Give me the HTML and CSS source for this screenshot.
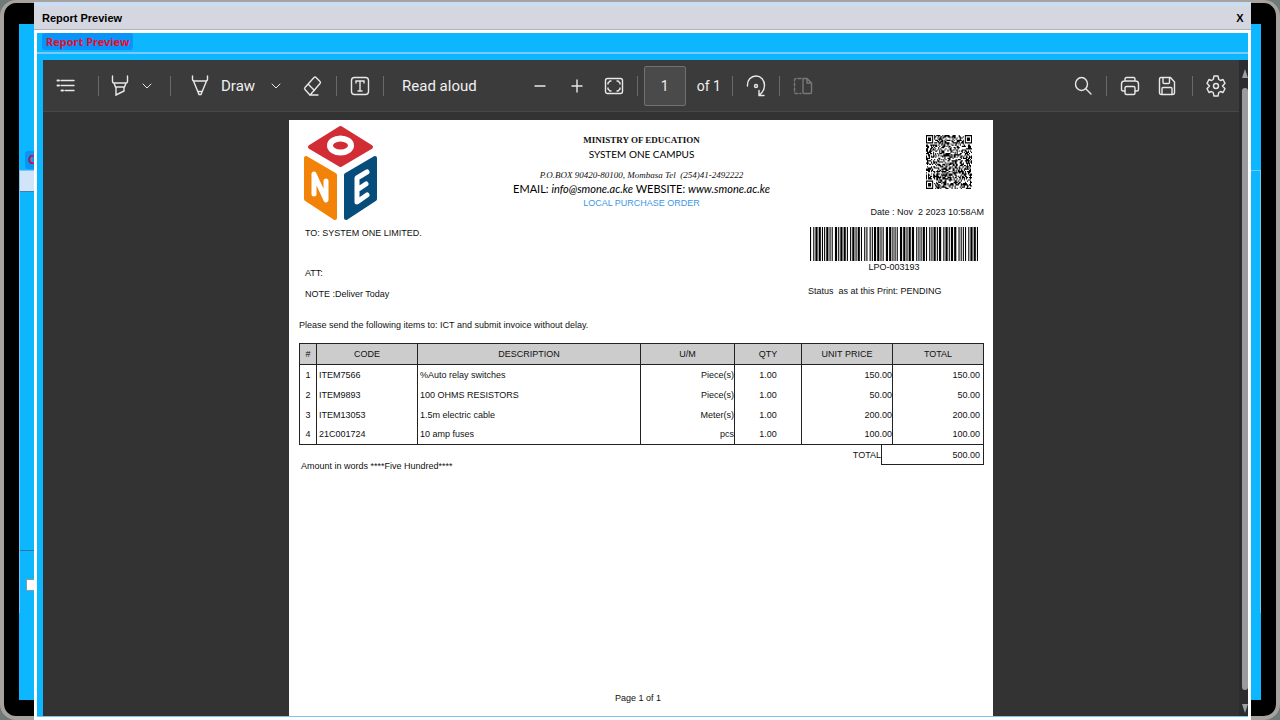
FILE: index.html
```
<!DOCTYPE html>
<html lang="en">

<head>
    <meta charset="UTF-8">
    <meta name="viewport" content="width=device-width, initial-scale=1.0">
    <title>Report Preview</title>
    <link rel="stylesheet" href="styles.css">
</head>

<body>
    <!-- form behind the preview window -->
    <div class="monitor">
        <div class="desktop">
            <span class="desktop-label">C</span>
            <div class="desktop-form">
                <div class="desktop-field"></div>
                <div class="desktop-line"></div>
                <div class="desktop-check"></div>
            </div>
        </div>
    </div>

    <div class="window">
        <div class="titlebar">
            <span>Report Preview</span>
            <button type="button" class="close" aria-label="Close">X</button>
        </div>
        <div class="window-body">
            <div class="caption"><span class="caption-label">Report Preview</span></div>
            <div class="viewer">
                <div class="viewer-main">
                    <div class="toolbar">
                        <button type="button" class="tool" aria-label="Contents">
                            <svg width="20" height="20" viewBox="0 0 20 20"><path d="M5 4.500h13M5 9.500h13M9 14.500h9"/><path d="M1.500 4.500h1.500M1.500 9.500h1.500M5.500 14.500h1.500" stroke-width="2"/></svg>
                        </button>
                        <span class="sep sep-first"></span>
                        <button type="button" class="tool" aria-label="Highlight">
                            <svg width="20" height="24" viewBox="0 0 20 24"><path d="M2.500 2v5.500q0 1.500 1.500 1.500h12q1.500 0 1.500-1.500V2M4 9l1.500 4h9L16 9M6 13v8l8-4v-4"/></svg>
                        </button>
                        <button type="button" class="chevron" aria-label="Highlight options">
                            <svg width="10" height="8" viewBox="0 0 10 8"><path d="M1 2l4 4 4-4"/></svg>
                        </button>
                        <span class="sep sep-wide"></span>
                        <button type="button" class="tool tool-text">
                            <svg width="24" height="24" viewBox="0 0 24 24"><path d="M4.500 2v3q0 2 1.500 2h12q1.500 0 1.500-2V2M5.500 7l5.500 13.500h2L18.500 7M10 17.500h4"/></svg>
                            <span>Draw</span>
                        </button>
                        <button type="button" class="chevron chevron-wide" aria-label="Draw options">
                            <svg width="10" height="8" viewBox="0 0 10 8"><path d="M1 2l4 4 4-4"/></svg>
                        </button>
                        <button type="button" class="tool" aria-label="Erase">
                            <svg width="20" height="22" viewBox="0 0 20 22"><path d="M11 2.500q1-1 2 0l4 4q1 1 0 2L8 19q-1 1-2 0l-4-4.500q-1-1 0-2zM5.500 9.500l6 6M6.500 20H15"/></svg>
                        </button>
                        <span class="sep"></span>
                        <button type="button" class="tool" aria-label="Add text">
                            <svg width="20" height="20" viewBox="0 0 20 20"><rect x="1.500" y="1.500" width="17" height="17" rx="3"/><path d="M6 7V5h8v2M10 5v10M8 15h4"/></svg>
                        </button>
                        <span class="sep"></span>
                        <button type="button" class="tool tool-read">Read aloud</button>
                        <div class="zoom">
                            <button type="button" class="tool" aria-label="Zoom out">
                                <svg width="14" height="14" viewBox="0 0 14 14"><path d="M2 7h10"/></svg>
                            </button>
                            <button type="button" class="tool" aria-label="Zoom in">
                                <svg width="14" height="14" viewBox="0 0 14 14"><path d="M2 7h10M7 1v12"/></svg>
                            </button>
                            <button type="button" class="tool" aria-label="Fit to page">
                                <svg width="20" height="20" viewBox="0 0 20 20"><rect x="1.500" y="2.500" width="17" height="15" rx="2"/><path d="M4 8V7l2-2h1M13 5h1l2 2v1M16 12v1l-2 2h-1M7 15H6l-2-2v-1"/></svg>
                            </button>
                        </div>
                        <span class="sep sep-page"></span>
                        <input class="page-input" id="pageNumber" type="text" value="1">
                        <label class="page-count" for="pageNumber">of 1</label>
                        <span class="sep"></span>
                        <button type="button" class="tool" aria-label="Rotate">
                            <svg width="20" height="24" viewBox="0 0 20 24"><path d="M1.500 12C1 6 5 2 10 2s8.500 4 8.500 9.500c0 4-2 7-5 9.500M13 16.500V21.500h5"/><circle cx="10" cy="12" r="1.500"/></svg>
                        </button>
                        <span class="sep"></span>
                        <button type="button" class="tool tool-off" aria-label="Page view" disabled>
                            <svg width="20" height="20" viewBox="0 0 20 20"><path d="M10 2.500h4l4.500 4.500v9.500q0 1-1 1H11q-1 0-1-1zM14 2.500V7h4.500"/><path d="M8 2.500H3q-1.500 0-1.500 1.500v12q0 1.500 1.500 1.500h5" stroke-dasharray="3 2"/></svg>
                        </button>
                        <div class="toolbar-right">
                            <button type="button" class="tool" aria-label="Find">
                                <svg width="20" height="22" viewBox="0 0 20 22"><ellipse cx="8.500" cy="9" rx="6" ry="6.500"/><path d="M13 14l5 5"/></svg>
                            </button>
                            <span class="sep"></span>
                            <button type="button" class="tool" aria-label="Print">
                                <svg width="20" height="20" viewBox="0 0 20 20"><path d="M5 15H3q-1.500 0-1.500-1.500V8q0-3 3-3h11q3 0 3 3v5.500Q18.500 15 17 15h-2M5 5V3q0-1.500 1.500-1.500h7Q15 1.500 15 3v2"/><rect x="5" y="10.500" width="10" height="8" rx="1.500"/></svg>
                            </button>
                            <button type="button" class="tool tool-save" aria-label="Save">
                                <svg width="20" height="20" viewBox="0 0 20 20"><path d="M4 1.500h9.500L17.500 6v10.500q0 2-2 2h-11q-2 0-2-2v-13q0-2 1.500-2zM6 2v4.500q0 1 1 1h4.500q1 0 1-1V2M5 18v-5.500q0-1 1-1h8q1 0 1 1V18"/></svg>
                            </button>
                            <span class="sep sep-gear"></span>
                            <button type="button" class="tool" aria-label="Settings">
                                <svg width="20" height="24" viewBox="0 0 20 24"><path d="M8 2h4l.8 3.500 1.700 1L17 5.500l2 3.800L16.500 12l2.500 2.700-2 3.800-2.500-1-1.700 1L12 22H8l-.8-3.500-1.700-1-2.500 1-2-3.800L3.500 12 1 9.300l2-3.800 2.500 1 1.700-1z" stroke-linejoin="round"/><circle cx="10" cy="12" r="2.500"/></svg>
                            </button>
                        </div>
                    </div>

                    <div class="paper">
                        <div class="head">
                            <div class="head-left">
                                <svg class="logo" width="73" height="96" viewBox="0 0 73 96" role="img" aria-label="ONE">
                                    <g stroke-linejoin="round" stroke-width="4">
                                        <path fill="#d22d35" stroke="#d22d35" d="M36.500 3L67 22 36.500 40 6 22z"/>
                                        <path fill="#f28208" stroke="#f28208" d="M2 33l29 17v43L2 74z"/>
                                        <path fill="#064d7c" stroke="#064d7c" d="M71 33L42 50v43l29-19z"/>
                                    </g>
                                    <ellipse cx="36.500" cy="20.500" rx="10.500" ry="7" fill="none" stroke="#fff" stroke-width="6"/>
                                    <g fill="none" stroke="#fff" stroke-width="5" stroke-linecap="round" stroke-linejoin="round">
                                        <path d="M10 69V49l12 26V56"/>
                                        <path d="M63 47l-10 6v24l10-7M53 65l9-6"/>
                                    </g>
                                </svg>
                                <p class="to">TO: SYSTEM ONE LIMITED.</p>
                                <p class="att">ATT:</p>
                                <p class="note">NOTE :Deliver Today</p>
                            </div>
                            <div class="head-center">
                                <p class="ministry">MINISTRY OF EDUCATION</p>
                                <p class="campus">SYSTEM ONE CAMPUS</p>
                                <p class="pobox">P.O.BOX 90420-80100, Mombasa Tel&nbsp; (254)41-2492222</p>
                                <p class="contact">EMAIL: <i>info@smone.ac.ke</i> WEBSITE: <i>www.smone.ac.ke</i></p>
                                <p class="order">LOCAL PURCHASE ORDER</p>
                            </div>
                            <div class="head-right">
                                <svg class="qr" id="qr" viewBox="0 0 45 45" preserveAspectRatio="none" role="img" aria-label="QR code"></svg>
                                <p class="date">Date : Nov&nbsp; 2 2023 10:58AM</p>
                                <svg class="barcode" id="barcode" preserveAspectRatio="none" role="img" aria-label="LPO-003193"></svg>
                                <p class="barcode-text">LPO-003193</p>
                                <p class="status">Status&nbsp; as at this Print: PENDING</p>
                            </div>
                        </div>

                        <p class="intro">Please send the following items to: ICT and submit invoice without delay.</p>

                        <table class="items">
                            <colgroup>
                                <col class="col-num"><col class="col-code"><col class="col-desc"><col class="col-um"><col class="col-qty"><col class="col-price"><col class="col-total">
                            </colgroup>
                            <thead>
                                <tr><th>#</th><th>CODE</th><th>DESCRIPTION</th><th>U/M</th><th>QTY</th><th>UNIT PRICE</th><th>TOTAL</th></tr>
                            </thead>
                            <tbody>
                                <tr><td>1</td><td>ITEM7566</td><td>%Auto relay switches</td><td>Piece(s)</td><td>1.00</td><td>150.00</td><td>150.00</td></tr>
                                <tr><td>2</td><td>ITEM9893</td><td>100 OHMS RESISTORS</td><td>Piece(s)</td><td>1.00</td><td>50.00</td><td>50.00</td></tr>
                                <tr><td>3</td><td>ITEM13053</td><td>1.5m electric cable</td><td>Meter(s)</td><td>1.00</td><td>200.00</td><td>200.00</td></tr>
                                <tr><td>4</td><td>21C001724</td><td>10 amp fuses</td><td>pcs</td><td>1.00</td><td>100.00</td><td>100.00</td></tr>
                            </tbody>
                        </table>
                        <div class="summary">
                            <p class="words">Amount in words ****Five Hundred****</p>
                            <span>TOTAL</span>
                            <span class="sum">500.00</span>
                        </div>
                        <p class="page-no">Page 1 of 1</p>
                    </div>
                </div>
                <div class="scrollbar">
                    <span class="arrow-up"></span>
                    <span class="thumb"></span>
                    <span class="arrow-down"></span>
                </div>
            </div>
        </div>
    </div>
    <script src="codes.js"></script>
</body>

</html>
```
FILE: codes.js
```
// Code 39: n = narrow, w = wide, bars and spaces alternate
var code39 = {
    "0": "nnnwwnwnn", "1": "wnnwnnnnw", "3": "wnwwnnnnn", "9": "nnwwnnwnn",
    "L": "nnwnnnnww", "P": "nnwnwnnwn", "O": "wnnnwnnwn",
    "-": "nwnnnnwnw", "*": "nwnnwnwnn"
};

function drawBarcode(svg, text) {
    var x = 0, d = "";
    ("*" + text + "*").split("").forEach(function (ch) {
        for (var i = 0; i < 9; i++) {
            var w = code39[ch][i] === "w" ? 2 : 1;
            if (i % 2 === 0) {
                d += "M" + x + " 0h" + w + "v10h-" + w + "z";
            }
            x += w;
        }
        x += 1;
    });
    svg.setAttribute("viewBox", "0 0 " + (x - 1) + " 10");
    svg.innerHTML = '<path d="' + d + '"/>';
}

function drawQr(svg) {
    var size = 45, seed = 3193, d = "";
    // finder squares in three corners
    function finder(x, y) {
        if (x > size - 9 && y < 8) { x = size - 1 - x; }
        if (y > size - 9 && x < 8) { y = size - 1 - y; }
        if (x > 7 || y > 7) { return null; }
        var r = Math.max(Math.abs(x - 3), Math.abs(y - 3));
        return r === 3 || r < 2;
    }
    for (var y = 0; y < size; y++) {
        for (var x = 0; x < size; x++) {
            seed = (seed * 1103515245 + 12345) % 2147483648;
            var on = finder(x, y);
            if (on === null) { on = seed / 2147483648 > 0.48; }
            if (on) { d += "M" + x + " " + y + "h1v1h-1z"; }
        }
    }
    svg.innerHTML = '<path d="' + d + '"/>';
}

drawBarcode(document.getElementById("barcode"), "LPO-003193");
drawQr(document.getElementById("qr"));
```
FILE: styles.css
```
* {
    margin: 0;
    padding: 0;
    box-sizing: border-box;
}

body {
    height: 100vh;
    overflow: hidden;
    background: #6f7b77;
    font-family: "Liberation Sans", Arial, sans-serif;
    font-size: 9px;
    line-height: 12px;
    color: #111;
}

button {
    border: 0;
    background: none;
    font: inherit;
    color: inherit;
}

/* monitor frame */
.monitor {
    height: 100%;
    padding: 21px 15px 16px;
    border: 4px solid #a8a29e;
    border-top-width: 3px;
    border-radius: 16px;
    background: #000;
}

.desktop {
    display: flex;
    flex-direction: column;
    height: 100%;
    padding-top: 127px;
    background: #0cb7ff;
}

.desktop-label {
    width: 40px;
    margin-left: 6px;
    padding: 1px 3px;
    border-radius: 3px;
    background: #0a94fa;
    color: #d0103a;
    font: bold 12px/16px "Noto Sans", sans-serif;
}

.desktop-form {
    height: 443px;
    margin-top: 1px;
    border: 1px solid #7cc4f5;
    border-bottom: 0;
}

.desktop-field {
    width: 60px;
    height: 21px;
    border-bottom: 1px solid #4a7fa5;
    background: #d2e4f8;
}

.desktop-line {
    width: 60px;
    height: 359px;
    border-bottom: 1px solid #35739a;
}

.desktop-check {
    width: 12px;
    height: 12px;
    margin: 28px 0 0 6px;
    border: 1px solid #8a9aa5;
    background: #fff;
}

/* preview window, floats over the desktop */
.window {
    position: absolute;
    inset: 2px 29px 0 34px;
    display: flex;
    flex-direction: column;
    background: #fff;
}

.titlebar {
    display: flex;
    align-items: center;
    justify-content: space-between;
    height: 28px;
    padding: 0 5px 0 8px;
    border-top: 4px solid #c9ddf4;
    border-bottom: 1px solid #b0b2b8;
    background: #d4d7df;
    color: #000;
    font-size: 11px;
    font-weight: bold;
    line-height: 16px;
}

.close {
    width: 12px;
}

.window-body {
    display: flex;
    flex: 1;
    flex-direction: column;
    min-height: 0;
    margin: 3px;
    padding-left: 6px;
    border-bottom: 1px solid #7cc4f5;
    background: #0cb7ff;
}

.caption {
    height: 21px;
    margin-left: -6px;
    padding-left: 5px;
    border-bottom: 2px solid #7cc8fb;
}

.caption-label {
    display: inline-block;
    padding: 0 4px;
    border-radius: 3px;
    background: #0a94fa;
    color: #e0102c;
    font: bold 11px/17px "Noto Sans", sans-serif;
}

.viewer {
    display: flex;
    flex: 1;
    min-height: 0;
    margin-top: 6px;
}

.viewer-main {
    display: flex;
    flex: 1;
    flex-direction: column;
    align-items: center;
    min-width: 0;
    background: #333;
}

/* toolbar */
.toolbar {
    display: flex;
    flex: none;
    align-items: center;
    width: 100%;
    height: 52px;
    padding: 0 11px;
    border-bottom: 1px solid #484848;
    background: #3b3b3b;
    color: #f0f0f0;
    font-family: Roboto, sans-serif;
    font-size: 15px;
    line-height: 20px;
    white-space: nowrap;
}

.toolbar svg {
    display: block;
    flex: none;
    fill: none;
    stroke: #e8e8e8;
    stroke-width: 1.400;
    stroke-linecap: round;
}

.tool {
    display: flex;
    align-items: center;
    justify-content: center;
    min-width: 24px;
}

.tool-text {
    gap: 9px;
}

.tool-read {
    margin: 0 51px 0 7px;
}

.tool-off {
    opacity: 0.35;
}

.chevron {
    display: flex;
    justify-content: center;
    width: 12px;
    margin-left: 9px;
}

.chevron-wide {
    margin: 0 19px 0 15px;
}

.toolbar .chevron svg {
    stroke-width: 1;
}

.sep {
    width: 1px;
    height: 20px;
    margin: 0 11px;
    background: #6a6a6a;
}

.sep-first {
    margin: 0 9px 0 20px;
}

.sep-wide {
    margin: 0 17px;
}

.sep-page {
    margin-right: 6px;
}

.sep-gear {
    margin-left: 13px;
}

.zoom {
    display: flex;
    gap: 13px;
}

.page-input {
    width: 42px;
    height: 40px;
    border: 1px solid #717171;
    border-radius: 2px;
    background: #4a4a4a;
    color: #f0f0f0;
    font: 14px Roboto, sans-serif;
    text-align: center;
}

.page-count {
    margin-left: 11px;
    font-size: 14px;
}

.toolbar-right {
    display: flex;
    align-items: center;
    margin-left: auto;
}

.tool-save {
    margin-left: 13px;
}

/* scrollbar */
.scrollbar {
    display: flex;
    flex-direction: column;
    align-items: center;
    width: 9px;
    padding: 9px 0 3px 3px;
    background: #2b2b30;
}

.arrow-up,
.arrow-down {
    border: 3px solid transparent;
    border-bottom: 9px solid #9aa0a4;
    border-top: 0;
}

.arrow-down {
    border-top: 9px solid #9aa0a4;
    border-bottom: 0;
}

.thumb {
    flex: 1;
    width: 6px;
    margin: 10px 0 14px;
    border-radius: 4px;
    background: #9b9b9e;
}

/* report page */
.paper {
    display: flex;
    flex: 1;
    flex-direction: column;
    width: 100%;
    max-width: 704px;
    margin-top: 8px;
    padding: 5px 9px 0 10px;
    background: #fff;
}

.head {
    display: grid;
    grid-template-columns: 176px 1fr 176px;
}

.head-left {
    padding-left: 5px;
}

.logo {
    display: block;
}

.to {
    margin-top: 6px;
    padding-left: 1px;
}

.att {
    margin-top: 28px;
    padding-left: 1px;
}

.note {
    margin-top: 9px;
    padding-left: 1px;
}

.head-center {
    padding-top: 8px;
    text-align: center;
    white-space: nowrap;
}

.ministry {
    font: bold 9px/14px "Liberation Serif", serif;
}

.campus {
    color: #000;
    font: 10px/14px Lato, sans-serif;
}

.pobox {
    margin-top: 7px;
    font: italic 9px/14px "Liberation Serif", serif;
}

.contact {
    color: #000;
    font: 11px/14px Lato, sans-serif;
}

.order {
    color: #3c97e6;
    line-height: 14px;
}

.head-right {
    display: flex;
    flex-direction: column;
}

.qr {
    width: 46px;
    height: 54px;
    margin: 10px 12px 0 auto;
}

.date {
    margin-top: 17px;
    text-align: right;
}

.barcode {
    width: 168px;
    height: 34px;
    margin: 9px 0 0 2px;
}

.barcode-text {
    width: 168px;
    margin-left: 2px;
    text-align: center;
}

.status {
    margin-top: 12px;
}

.intro {
    margin-top: 19px;
}

.items {
    width: 100%;
    margin-top: 12px;
    border: 1px solid #222;
    border-collapse: collapse;
    table-layout: fixed;
}

.col-num {
    width: 17px;
}

.col-code {
    width: 101px;
}

.col-desc {
    width: 223px;
}

.col-um {
    width: 94px;
}

.col-qty {
    width: 67px;
}

.col-price {
    width: 91px;
}

.items th,
.items td {
    height: 20px;
    border-left: 1px solid #222;
    white-space: nowrap;
}

.items th {
    height: 21px;
    border-bottom: 1px solid #222;
    background: #ccc;
    font-weight: normal;
}

.items td {
    padding: 0 2px;
}

.items td:nth-child(1),
.items td:nth-child(5) {
    text-align: center;
}

.items td:nth-child(4),
.items td:nth-child(6) {
    padding-right: 0;
    text-align: right;
}

.items td:nth-child(7) {
    padding-right: 3px;
    text-align: right;
}

.summary {
    display: flex;
    line-height: 20px;
}

.words {
    flex: 1;
    padding: 11px 0 0 2px;
}

.sum {
    width: 103px;
    height: 20px;
    padding-right: 3px;
    border: 1px solid #222;
    border-top: 0;
    text-align: right;
}

.page-no {
    margin: auto 7px 12px 0;
    text-align: center;
}
```
